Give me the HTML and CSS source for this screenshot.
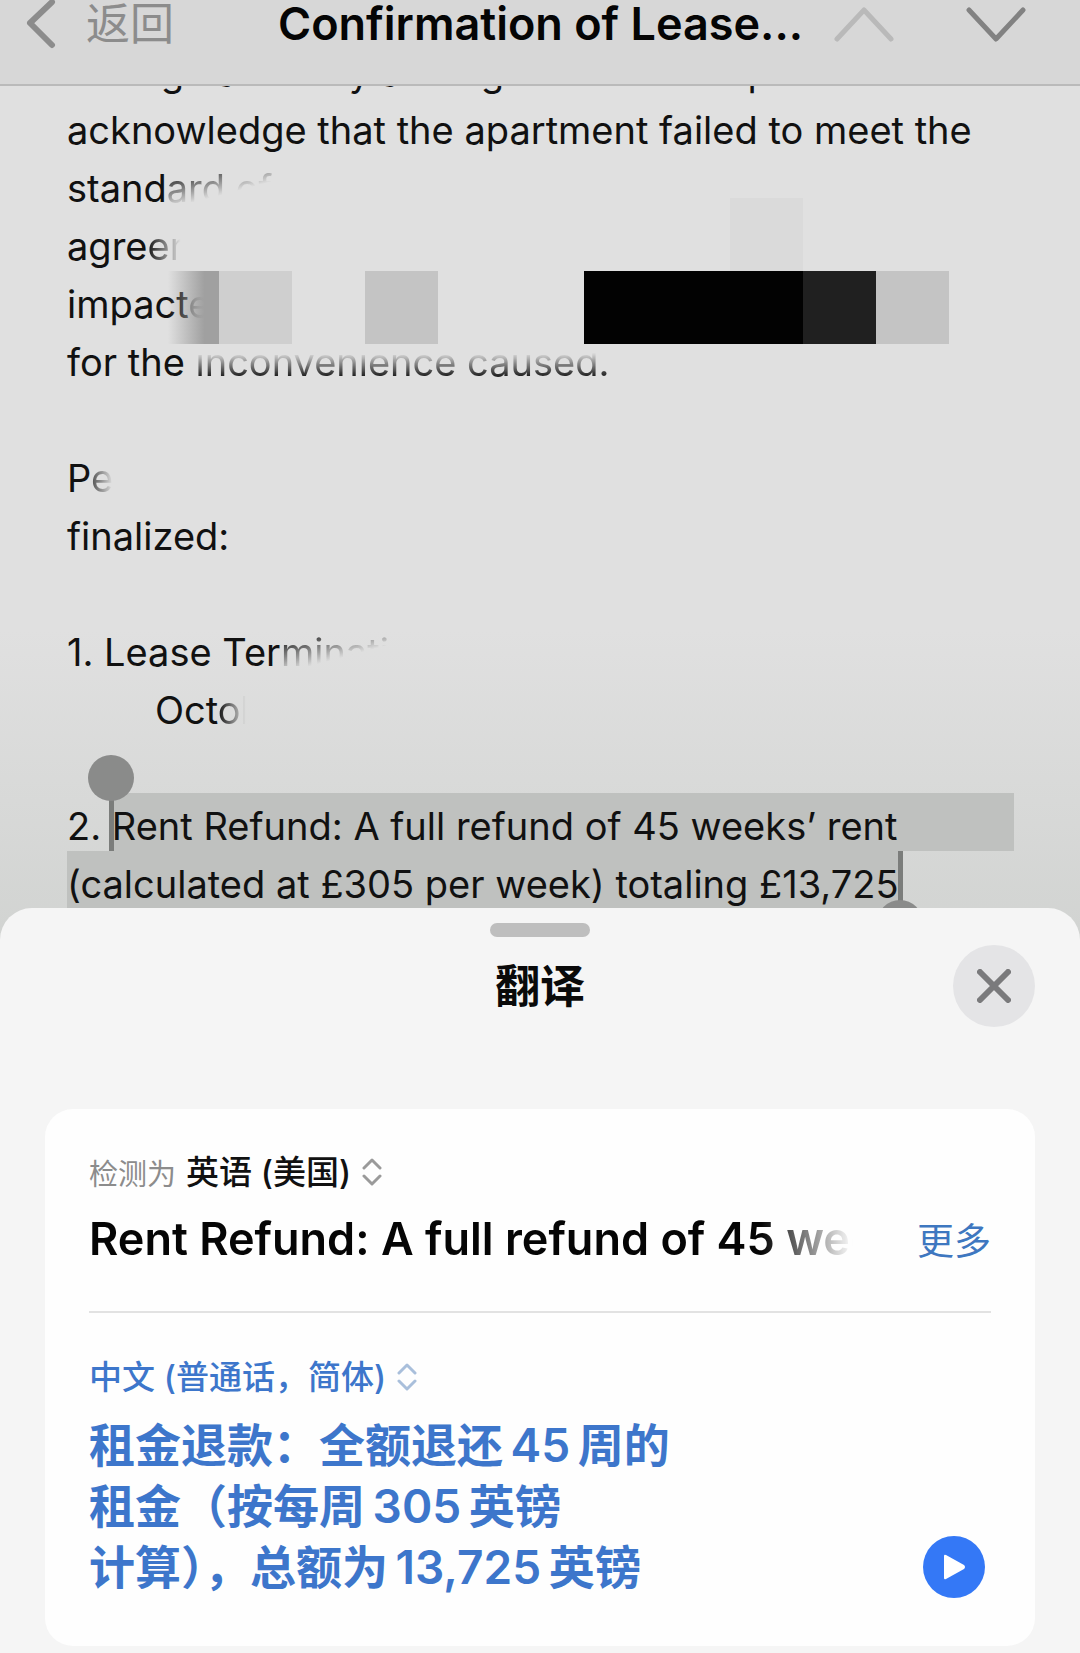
FILE: index.html
```html
<!DOCTYPE html>
<html lang="zh-CN">
<head>
    <meta charset="UTF-8">
    <meta name="viewport" content="width=device-width, initial-scale=1.0">
    <title>Confirmation of Lease</title>
    <link rel="stylesheet" href="styles.css">
</head>
<body>
    <header class="topbar">
        <button class="back">
            <svg width="30" height="50" viewBox="0 0 30 50"><path d="M26 3 L4 24 L26 46"/></svg>
            返回
        </button>
        <h1 class="title">Confirmation of Lease...</h1>
        <button class="nav-btn nav-up" aria-label="上一封">
            <svg width="60" height="36" viewBox="0 0 60 36"><path d="M3 33 L30 4 L57 33"/></svg>
        </button>
        <button class="nav-btn nav-down" aria-label="下一封">
            <svg width="60" height="36" viewBox="0 0 60 36"><path d="M3 4 L30 33 L57 4"/></svg>
        </button>
    </header>

    <main class="mail">
        <div class="line">through a survey among conditions reported. We</div>
        <div class="line">acknowledge that the apartment failed to meet the</div>
        <div class="line">stand<span class="fade-diag">ard of</span></div>
        <div class="line">agre<span class="fade-right">em</span></div>
        <div class="line">impact<span class="fade-end">e</span>
            <div class="mosaic">
                <i class="m0"></i>
                <i class="m1"></i><i class="m2"></i><i></i><i class="m3"></i><i></i><i></i><i class="m4"></i><i class="m4"></i><i class="m4"></i><i class="m5"></i><i class="m3"></i>
            </div>
        </div>
        <div class="line">for the <span class="fade-top">inconvenience caused.</span></div>
        <div class="line"></div>
        <div class="line">P<span class="fade-end">e</span></div>
        <div class="line">finalized:</div>
        <div class="line"></div>
        <div class="line">1. Lease Ter<span class="fade-diag">minati</span></div>
        <div class="line indent">Oct<span class="fade-right">ob</span></div>
        <div class="line"></div>
        <div class="line">2. <span class="selected first"><i class="handle start"></i>Rent Refund: A full refund of 45 weeks’ rent</span></div>
        <div class="line"><span class="selected">(calculated at £305 per week) totaling £13,725<i class="handle end"></i></span></div>
    </main>

    <section class="sheet">
        <div class="grabber"></div>
        <h2 class="sheet-title">翻译</h2>
        <button class="close" aria-label="关闭">
            <svg width="34" height="34" viewBox="0 0 34 34"><path d="M3 3 L31 31 M31 3 L3 31"/></svg>
        </button>

        <div class="card">
            <div class="source">
                <div class="lang">
                    <label class="detected" for="source-lang">检测为</label>
                    <select id="source-lang">
                        <option>英语 (美国)</option>
                    </select>
                    <svg width="20" height="28" viewBox="0 0 20 28"><path d="M2 10 L10 2 L18 10 M2 18 L10 26 L18 18"/></svg>
                </div>
                <div class="source-row">
                    <p class="source-text">Rent Refund: A full refund of 45 weeks’ rent</p>
                    <a class="more" href="#">更多</a>
                </div>
            </div>
            <div class="target">
                <div class="lang lang-blue">
                    <select id="target-lang" aria-label="翻译为">
                        <option>中文 (普通话，简体)</option>
                    </select>
                    <svg width="20" height="28" viewBox="0 0 20 28"><path d="M2 10 L10 2 L18 10 M2 18 L10 26 L18 18"/></svg>
                </div>
                <div class="target-row">
                    <p class="target-text">租金退款：全额退还&thinsp;45&thinsp;周的<br>租金（按每周&thinsp;305&thinsp;英镑<br>计算），总额为&thinsp;13,725&thinsp;英镑</p>
                    <button class="play" aria-label="播放">
                        <svg width="24" height="28" viewBox="0 0 24 28"><path d="M2 3 Q2 1 4 2 L22 12 Q24 14 22 16 L4 26 Q2 27 2 25 Z"/></svg>
                    </button>
                </div>
            </div>
        </div>
    </section>
</body>
</html>
```
FILE: styles.css
```css
* {
    box-sizing: border-box;
}

body {
    margin: 0;
    background-color: #f5f5f5;
    color: #111;
    font-family: Inter, "Noto Sans CJK SC", sans-serif;
}

button,
select {
    padding: 0;
    border: none;
    background: none;
    color: inherit;
    font: inherit;
    cursor: pointer;
}

select {
    appearance: none;
}

svg {
    display: block;
    fill: none;
    stroke: currentColor;
    stroke-width: 6;
    stroke-linecap: round;
    stroke-linejoin: round;
}

/* Top bar */
.topbar {
    position: relative;
    z-index: 2;
    display: flex;
    align-items: flex-start;
    height: 86px;
    padding: 0 54px 0 26px;
    background-color: #d7d7d7;
    border-bottom: 2px solid #bababa;
}

.back {
    display: flex;
    align-items: center;
    gap: 30px;
    height: 48px;
    color: #8c8c8c;
    font-size: 44px;
    line-height: 48px;
}

.title {
    flex: 1;
    margin: 0 0 0 104px;
    color: #050505;
    font-size: 45px;
    font-weight: 600;
    line-height: 48px;
    white-space: nowrap;
}

.nav-btn {
    height: 48px;
    color: #828282;
}

.nav-btn svg {
    stroke-width: 5;
}

.nav-up {
    margin-right: 72px;
    color: #b9b9b9;
}

/* Mail text */
.mail {
    margin-top: -47px;
    padding: 0 67px 40px;
    background: linear-gradient(#e0e0e0 65%, #d1d3d1);
    font-size: 38px;
    overflow: hidden;
}

.line {
    position: relative;
    height: 58px;
    padding-top: 8px;
    line-height: 50px;
    white-space: nowrap;
}

.indent {
    padding-left: 88px;
}

.fade-right {
    mask-image: linear-gradient(to right, #000, transparent 60%);
}

.fade-end {
    mask-image: linear-gradient(to right, rgba(0, 0, 0, 0.7), transparent);
}

.fade-diag {
    mask-image: linear-gradient(165deg, #000 10%, transparent 60%);
}

.fade-top {
    mask-image: linear-gradient(transparent 30%, #000 85%);
}

/* Mosaic blocks laid over the text */
.mosaic {
    position: absolute;
    top: -73px;
    left: 79px;
    display: grid;
    grid-template-columns: repeat(11, 73px);
    grid-template-rows: 73px 73px;
}

.m0 {
    grid-column: 9 / -1;
    width: 73px;
    background-color: #dadada;
}

.m1 { background: linear-gradient(to right, transparent 30%, #a0a0a0 80%); }
.m2 { background-color: #cfcfcf; }
.m3 { background-color: #c4c4c4; }
.m4 { background-color: #020202; }
.m5 { background-color: #202020; }

/* Selection */
.selected {
    position: relative;
    display: inline-block;
    height: 58px;
    margin-top: -8px;
    padding-top: 8px;
    background-color: #bfc1bf;
    vertical-align: top;
}

.first {
    width: 902px;
}

.handle {
    position: absolute;
    top: 0;
    width: 5px;
    height: 58px;
    background-color: #7b7d7b;
}

.start { left: -3px; }
.end { right: -4px; }

.handle::before {
    content: "";
    position: absolute;
    left: -21px;
    width: 46px;
    height: 46px;
    border-radius: 50%;
    background-color: #8a8b8a;
}

.start::before { top: -38px; }
.end::before { top: 49px; }

/* Translate sheet */
.sheet {
    position: relative;
    z-index: 2;
    margin-top: -41px;
    padding: 15px 45px 7px;
    background-color: #f5f5f5;
    border-radius: 32px 32px 0 0;
}

.grabber {
    width: 100px;
    height: 14px;
    margin: 0 auto;
    border-radius: 7px;
    background-color: #bebebe;
}

.sheet-title {
    margin: 16px 0 88px;
    color: #0a0a0a;
    font-size: 45px;
    font-weight: 600;
    line-height: 68px;
    text-align: center;
}

.close {
    position: absolute;
    top: 37px;
    right: 45px;
    display: grid;
    place-items: center;
    width: 82px;
    height: 82px;
    border-radius: 50%;
    background-color: #e4e4e6;
    color: #7a7a7c;
}

.card {
    padding: 38px 44px 48px;
    border-radius: 28px;
    background-color: #fefefe;
}

.lang {
    display: flex;
    align-items: center;
    gap: 10px;
    height: 50px;
    font-size: 33px;
    font-weight: 500;
}

.lang svg {
    stroke-width: 3;
    color: #9a9a9a;
}

.detected {
    color: #8c8c8c;
    font-size: 29px;
    font-weight: 400;
}

.source-row {
    display: flex;
    justify-content: space-between;
    align-items: center;
    padding: 6px 0 36px;
    border-bottom: 2px solid #e2e2e2;
}

.source-text {
    width: 764px;
    margin: 0;
    color: #050505;
    font-size: 45px;
    font-weight: 600;
    line-height: 72px;
    white-space: nowrap;
    overflow: hidden;
    mask-image: linear-gradient(to right, #000 88%, transparent);
}

.more {
    color: #3e77c0;
    font-size: 37px;
    text-decoration: none;
}

.target {
    padding-top: 39px;
}

.lang-blue,
.target-text {
    color: #3d76cb;
}

.lang-blue svg {
    color: #a9bfdb;
}

.target-row {
    display: flex;
    justify-content: space-between;
    align-items: flex-end;
}

.target-text {
    margin: 13px 0 0;
    font-size: 46px;
    font-weight: 600;
    line-height: 61px;
}

.play {
    display: grid;
    place-items: center;
    width: 62px;
    height: 62px;
    margin-right: 6px;
    border-radius: 50%;
    background-color: #3478f6;
    color: #fff;
}

.play svg {
    fill: currentColor;
    stroke: none;
}
```
